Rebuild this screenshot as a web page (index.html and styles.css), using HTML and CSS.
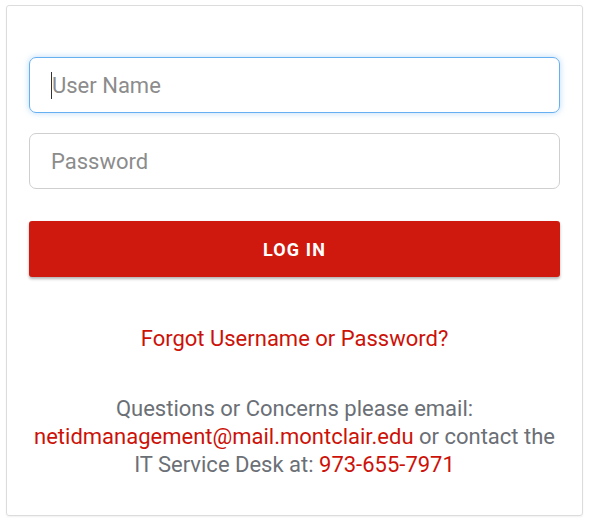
FILE: index.html
```html
<!DOCTYPE html>
<html>
<head>
<meta charset="utf-8">
<link rel="stylesheet" href="styles.css">
</head>
<body>
<div class="card">
  <form class="form">
    <div class="field focused"><span class="caret"></span><span class="ph">User Name</span></div>
    <div class="field"><span class="ph">Password</span></div>
    <button class="btn" type="button">LOG IN</button>
  </form>
  <p class="forgot"><a href="#">Forgot Username or Password?</a></p>
  <p class="help">Questions or Concerns please email:<br><a href="#">netidmanagement@mail.montclair.edu</a> or contact the<br>IT Service Desk at: <a href="#">973-655-7971</a></p>
</div>
</body>
</html>
```
FILE: styles.css
```css
html, body { margin: 0; padding: 0; background: #fff; }
body { padding: 5px 6px; font-family: Roboto, "Liberation Sans", sans-serif; }
.card {
  width: 577px;
  height: 511px;
  box-sizing: border-box;
  border: 1px solid #dcdcdc;
  border-radius: 3px;
  box-shadow: 0 1px 2px rgba(0,0,0,0.06);
  padding: 51px 22px 0 22px;
}
.form { display: flex; flex-direction: column; }
.field {
  height: 56px;
  box-sizing: border-box;
  border: 1px solid #cfcfcf;
  border-radius: 7px;
  display: flex;
  align-items: center;
  padding-left: 21px;
  margin-bottom: 20px;
  font-size: 22px;
  color: #8a8a8a;
}
.field.focused {
  border-color: #66aff0;
  box-shadow: 0 0 6px rgba(102,175,240,0.45);
}
.caret { width: 1px; height: 27px; background: #333; margin-right: 0; }
.ph { color: #8c8c8c; }
.btn {
  margin-top: 12px;
  height: 56px;
  border: none;
  border-radius: 3px;
  background: #d0190e;
  color: #fff;
  font-family: Roboto, "Liberation Sans", sans-serif;
  font-weight: 700;
  font-size: 18px;
  letter-spacing: 1.1px;
  box-shadow: 0 2px 3px rgba(0,0,0,0.3);
}
.forgot { margin: 48px 0 0; text-align: center; font-size: 22px; line-height: 28px; }
.forgot a, .help a { color: #cc1208; text-decoration: none; }
.help { margin: 42px 0 0; text-align: center; font-size: 22px; line-height: 28px; color: #6b6f76; }
```
